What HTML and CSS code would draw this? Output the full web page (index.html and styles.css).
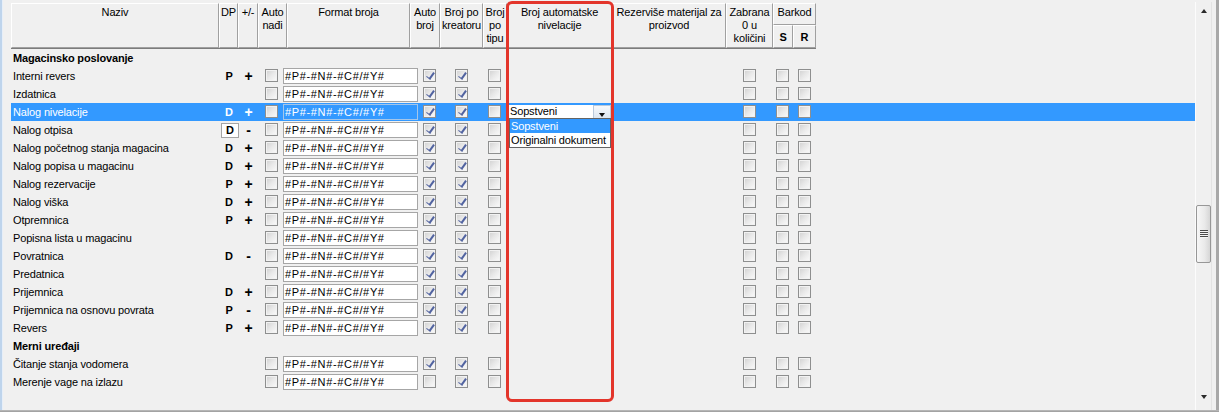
FILE: index.html
```html
<!DOCTYPE html>
<html lang="sr">
<head>
<meta charset="utf-8">
<title>Tipovi dokumenata</title>
<link rel="stylesheet" href="styles.css">
</head>
<body>
<div class="screen">
  <div class="edge"></div>
  <div class="pane">
    <div class="head">
      <div class="hc">Naziv</div>
      <div class="hc">DP</div>
      <div class="hc">+/-</div>
      <div class="hc">Auto<br>nađi</div>
      <div class="hc">Format broja</div>
      <div class="hc">Auto<br>broj</div>
      <div class="hc">Broj po<br>kreatoru</div>
      <div class="hc">Broj<br>po<br>tipu</div>
      <div class="hc">Broj automatske<br>nivelacije</div>
      <div class="hc">Rezerviše materijal za<br>proizvod</div>
      <div class="hc">Zabrana<br>0 u<br>količini</div>
      <div class="hgroup">
        <div class="hc htop">Barkod</div>
        <div class="hsub">
          <div class="hc hb">S</div>
          <div class="hc hb">R</div>
        </div>
      </div>
    </div>

    <div class="rows">
      <div class="row group"><span class="name">Magacinsko poslovanje</span></div>

      <div class="row">
        <span class="name">Interni revers</span><span class="dp">P</span><span class="sign">+</span>
        <span class="cell c-nadji"><i class="cb"></i></span>
        <span class="cell c-fmt"><span class="fmt">#P#-#N#-#C#/#Y#</span></span>
        <span class="cell c-auto"><i class="cb on"></i></span>
        <span class="cell c-kre"><i class="cb on"></i></span>
        <span class="cell c-tip"><i class="cb"></i></span>
        <span class="cell c-niv"></span><span class="cell c-rez"></span>
        <span class="cell c-zab"><i class="cb"></i></span>
        <span class="cell c-s"><i class="cb"></i></span>
        <span class="cell c-r"><i class="cb"></i></span>
      </div>

      <div class="row">
        <span class="name">Izdatnica</span><span class="dp"></span><span class="sign"></span>
        <span class="cell c-nadji"><i class="cb"></i></span>
        <span class="cell c-fmt"><span class="fmt">#P#-#N#-#C#/#Y#</span></span>
        <span class="cell c-auto"><i class="cb on"></i></span>
        <span class="cell c-kre"><i class="cb on"></i></span>
        <span class="cell c-tip"><i class="cb"></i></span>
        <span class="cell c-niv"></span><span class="cell c-rez"></span>
        <span class="cell c-zab"><i class="cb"></i></span>
        <span class="cell c-s"><i class="cb"></i></span>
        <span class="cell c-r"><i class="cb"></i></span>
      </div>

      <div class="row sel">
        <span class="name">Nalog nivelacije</span><span class="dp">D</span><span class="sign">+</span>
        <span class="cell c-nadji"><i class="cb"></i></span>
        <span class="cell c-fmt"><span class="fmt">#P#-#N#-#C#/#Y#</span></span>
        <span class="cell c-auto"><i class="cb on"></i></span>
        <span class="cell c-kre"><i class="cb on"></i></span>
        <span class="cell c-tip"><i class="cb"></i></span>
        <span class="cell c-niv">
          <span class="combo">
            <span class="combo-val">Sopstveni</span>
            <span class="combo-btn"><i class="tri-down"></i></span>
            <span class="combo-list">
              <span class="opt hi">Sopstveni</span>
              <span class="opt">Originalni dokument</span>
            </span>
          </span>
        </span>
        <span class="cell c-rez"></span>
        <span class="cell c-zab"><i class="cb"></i></span>
        <span class="cell c-s"><i class="cb"></i></span>
        <span class="cell c-r"><i class="cb"></i></span>
      </div>

      <div class="row">
        <span class="name">Nalog otpisa</span><span class="dp"><span class="dp-edit">D</span></span><span class="sign">-</span>
        <span class="cell c-nadji"><i class="cb"></i></span>
        <span class="cell c-fmt"><span class="fmt">#P#-#N#-#C#/#Y#</span></span>
        <span class="cell c-auto"><i class="cb on"></i></span>
        <span class="cell c-kre"><i class="cb on"></i></span>
        <span class="cell c-tip"><i class="cb"></i></span>
        <span class="cell c-niv"></span><span class="cell c-rez"></span>
        <span class="cell c-zab"><i class="cb"></i></span>
        <span class="cell c-s"><i class="cb"></i></span>
        <span class="cell c-r"><i class="cb"></i></span>
      </div>

      <div class="row">
        <span class="name">Nalog početnog stanja magacina</span><span class="dp">D</span><span class="sign">+</span>
        <span class="cell c-nadji"><i class="cb"></i></span>
        <span class="cell c-fmt"><span class="fmt">#P#-#N#-#C#/#Y#</span></span>
        <span class="cell c-auto"><i class="cb on"></i></span>
        <span class="cell c-kre"><i class="cb on"></i></span>
        <span class="cell c-tip"><i class="cb"></i></span>
        <span class="cell c-niv"></span><span class="cell c-rez"></span>
        <span class="cell c-zab"><i class="cb"></i></span>
        <span class="cell c-s"><i class="cb"></i></span>
        <span class="cell c-r"><i class="cb"></i></span>
      </div>

      <div class="row">
        <span class="name">Nalog popisa u magacinu</span><span class="dp">D</span><span class="sign">+</span>
        <span class="cell c-nadji"><i class="cb"></i></span>
        <span class="cell c-fmt"><span class="fmt">#P#-#N#-#C#/#Y#</span></span>
        <span class="cell c-auto"><i class="cb on"></i></span>
        <span class="cell c-kre"><i class="cb on"></i></span>
        <span class="cell c-tip"><i class="cb"></i></span>
        <span class="cell c-niv"></span><span class="cell c-rez"></span>
        <span class="cell c-zab"><i class="cb"></i></span>
        <span class="cell c-s"><i class="cb"></i></span>
        <span class="cell c-r"><i class="cb"></i></span>
      </div>

      <div class="row">
        <span class="name">Nalog rezervacije</span><span class="dp">P</span><span class="sign">+</span>
        <span class="cell c-nadji"><i class="cb"></i></span>
        <span class="cell c-fmt"><span class="fmt">#P#-#N#-#C#/#Y#</span></span>
        <span class="cell c-auto"><i class="cb on"></i></span>
        <span class="cell c-kre"><i class="cb on"></i></span>
        <span class="cell c-tip"><i class="cb"></i></span>
        <span class="cell c-niv"></span><span class="cell c-rez"></span>
        <span class="cell c-zab"><i class="cb"></i></span>
        <span class="cell c-s"><i class="cb"></i></span>
        <span class="cell c-r"><i class="cb"></i></span>
      </div>

      <div class="row">
        <span class="name">Nalog viška</span><span class="dp">D</span><span class="sign">+</span>
        <span class="cell c-nadji"><i class="cb"></i></span>
        <span class="cell c-fmt"><span class="fmt">#P#-#N#-#C#/#Y#</span></span>
        <span class="cell c-auto"><i class="cb on"></i></span>
        <span class="cell c-kre"><i class="cb on"></i></span>
        <span class="cell c-tip"><i class="cb"></i></span>
        <span class="cell c-niv"></span><span class="cell c-rez"></span>
        <span class="cell c-zab"><i class="cb"></i></span>
        <span class="cell c-s"><i class="cb"></i></span>
        <span class="cell c-r"><i class="cb"></i></span>
      </div>

      <div class="row">
        <span class="name">Otpremnica</span><span class="dp">P</span><span class="sign">+</span>
        <span class="cell c-nadji"><i class="cb"></i></span>
        <span class="cell c-fmt"><span class="fmt">#P#-#N#-#C#/#Y#</span></span>
        <span class="cell c-auto"><i class="cb on"></i></span>
        <span class="cell c-kre"><i class="cb on"></i></span>
        <span class="cell c-tip"><i class="cb"></i></span>
        <span class="cell c-niv"></span><span class="cell c-rez"></span>
        <span class="cell c-zab"><i class="cb"></i></span>
        <span class="cell c-s"><i class="cb"></i></span>
        <span class="cell c-r"><i class="cb"></i></span>
      </div>

      <div class="row">
        <span class="name">Popisna lista u magacinu</span><span class="dp"></span><span class="sign"></span>
        <span class="cell c-nadji"><i class="cb"></i></span>
        <span class="cell c-fmt"><span class="fmt">#P#-#N#-#C#/#Y#</span></span>
        <span class="cell c-auto"><i class="cb on"></i></span>
        <span class="cell c-kre"><i class="cb on"></i></span>
        <span class="cell c-tip"><i class="cb"></i></span>
        <span class="cell c-niv"></span><span class="cell c-rez"></span>
        <span class="cell c-zab"><i class="cb"></i></span>
        <span class="cell c-s"><i class="cb"></i></span>
        <span class="cell c-r"><i class="cb"></i></span>
      </div>

      <div class="row">
        <span class="name">Povratnica</span><span class="dp">D</span><span class="sign">-</span>
        <span class="cell c-nadji"><i class="cb"></i></span>
        <span class="cell c-fmt"><span class="fmt">#P#-#N#-#C#/#Y#</span></span>
        <span class="cell c-auto"><i class="cb on"></i></span>
        <span class="cell c-kre"><i class="cb on"></i></span>
        <span class="cell c-tip"><i class="cb"></i></span>
        <span class="cell c-niv"></span><span class="cell c-rez"></span>
        <span class="cell c-zab"><i class="cb"></i></span>
        <span class="cell c-s"><i class="cb"></i></span>
        <span class="cell c-r"><i class="cb"></i></span>
      </div>

      <div class="row">
        <span class="name">Predatnica</span><span class="dp"></span><span class="sign"></span>
        <span class="cell c-nadji"><i class="cb"></i></span>
        <span class="cell c-fmt"><span class="fmt">#P#-#N#-#C#/#Y#</span></span>
        <span class="cell c-auto"><i class="cb on"></i></span>
        <span class="cell c-kre"><i class="cb on"></i></span>
        <span class="cell c-tip"><i class="cb"></i></span>
        <span class="cell c-niv"></span><span class="cell c-rez"></span>
        <span class="cell c-zab"><i class="cb"></i></span>
        <span class="cell c-s"><i class="cb"></i></span>
        <span class="cell c-r"><i class="cb"></i></span>
      </div>

      <div class="row">
        <span class="name">Prijemnica</span><span class="dp">D</span><span class="sign">+</span>
        <span class="cell c-nadji"><i class="cb"></i></span>
        <span class="cell c-fmt"><span class="fmt">#P#-#N#-#C#/#Y#</span></span>
        <span class="cell c-auto"><i class="cb on"></i></span>
        <span class="cell c-kre"><i class="cb on"></i></span>
        <span class="cell c-tip"><i class="cb"></i></span>
        <span class="cell c-niv"></span><span class="cell c-rez"></span>
        <span class="cell c-zab"><i class="cb"></i></span>
        <span class="cell c-s"><i class="cb"></i></span>
        <span class="cell c-r"><i class="cb"></i></span>
      </div>

      <div class="row">
        <span class="name">Prijemnica na osnovu povrata</span><span class="dp">P</span><span class="sign">-</span>
        <span class="cell c-nadji"><i class="cb"></i></span>
        <span class="cell c-fmt"><span class="fmt">#P#-#N#-#C#/#Y#</span></span>
        <span class="cell c-auto"><i class="cb on"></i></span>
        <span class="cell c-kre"><i class="cb on"></i></span>
        <span class="cell c-tip"><i class="cb"></i></span>
        <span class="cell c-niv"></span><span class="cell c-rez"></span>
        <span class="cell c-zab"><i class="cb"></i></span>
        <span class="cell c-s"><i class="cb"></i></span>
        <span class="cell c-r"><i class="cb"></i></span>
      </div>

      <div class="row">
        <span class="name">Revers</span><span class="dp">P</span><span class="sign">+</span>
        <span class="cell c-nadji"><i class="cb"></i></span>
        <span class="cell c-fmt"><span class="fmt">#P#-#N#-#C#/#Y#</span></span>
        <span class="cell c-auto"><i class="cb on"></i></span>
        <span class="cell c-kre"><i class="cb on"></i></span>
        <span class="cell c-tip"><i class="cb"></i></span>
        <span class="cell c-niv"></span><span class="cell c-rez"></span>
        <span class="cell c-zab"><i class="cb"></i></span>
        <span class="cell c-s"><i class="cb"></i></span>
        <span class="cell c-r"><i class="cb"></i></span>
      </div>

      <div class="row group"><span class="name">Merni uređaji</span></div>

      <div class="row">
        <span class="name">Čitanje stanja vodomera</span><span class="dp"></span><span class="sign"></span>
        <span class="cell c-nadji"><i class="cb"></i></span>
        <span class="cell c-fmt"><span class="fmt">#P#-#N#-#C#/#Y#</span></span>
        <span class="cell c-auto"><i class="cb on"></i></span>
        <span class="cell c-kre"><i class="cb on"></i></span>
        <span class="cell c-tip"><i class="cb"></i></span>
        <span class="cell c-niv"></span><span class="cell c-rez"></span>
        <span class="cell c-zab"><i class="cb"></i></span>
        <span class="cell c-s"><i class="cb"></i></span>
        <span class="cell c-r"><i class="cb"></i></span>
      </div>

      <div class="row">
        <span class="name">Merenje vage na izlazu</span><span class="dp"></span><span class="sign"></span>
        <span class="cell c-nadji"><i class="cb"></i></span>
        <span class="cell c-fmt"><span class="fmt">#P#-#N#-#C#/#Y#</span></span>
        <span class="cell c-auto"><i class="cb"></i></span>
        <span class="cell c-kre"><i class="cb on"></i></span>
        <span class="cell c-tip"><i class="cb"></i></span>
        <span class="cell c-niv"></span><span class="cell c-rez"></span>
        <span class="cell c-zab"><i class="cb"></i></span>
        <span class="cell c-s"><i class="cb"></i></span>
        <span class="cell c-r"><i class="cb"></i></span>
      </div>
    </div>

    <div class="col-mark"></div>
  </div>

  <div class="vscroll">
    <i class="arr-up"></i>
    <div class="thumb"><i class="grip"></i></div>
    <i class="arr-down"></i>
  </div>
  <div class="gap"></div>
  <div class="frame-r"></div>
</div>
<div class="base-line"></div>
</body>
</html>
```

FILE: styles.css
```css
* {
  box-sizing: border-box;
}

body {
  margin: 0;
  background: #f0f0f0;
  font-family: "Liberation Sans", Arial, sans-serif;
  font-size: 11px;
  letter-spacing: -0.15px;
  color: #000;
  overflow: hidden;
}

.screen {
  display: flex;
  height: 410px;
}

.edge {
  width: 3px;
  background: linear-gradient(to right, #bed4ec 0 2px, #e6eef8 2px);
}

.pane {
  flex: 1;
  position: relative;
  padding: 3px 0 0 8px;
}

/* ---------- column headers ---------- */
.head {
  display: grid;
  grid-template-columns: 208px 19px 20px 29px 123px 30px 43px 24px 105px 114px 47px 43px;
  width: 805px;
  height: 46px;
  border-bottom: 1px solid #7c7c7c;
}

.hc {
  border-top: 1px solid #fff;
  border-left: 1px solid #fff;
  border-right: 1px solid #a0a0a0;
  border-bottom: 1px solid #a0a0a0;
  padding-top: 2px;
  text-align: center;
  line-height: 13px;
  white-space: nowrap;
  overflow: visible;
}

.hgroup {
  display: flex;
  flex-direction: column;
}

.htop {
  height: 22px;
}

.hsub {
  flex: 1;
  display: grid;
  grid-template-columns: 20px 23px;
}

.hb {
  font-weight: bold;
  padding-top: 5px;
}

/* ---------- body rows ---------- */
.row {
  display: grid;
  grid-template-columns: 208px 19px 20px 24px 137px 21px 43px 24px 105px 114px 47px 20px 23px 1fr;
  height: 18px;
  line-height: 18px;
}

.row.sel {
  background: #3399ff;
  color: #fff;
}

.name {
  padding-left: 2px;
  white-space: nowrap;
}

.group .name {
  font-weight: bold;
}

.dp {
  font-weight: bold;
  text-align: center;
  padding-left: 1px;
}

.dp-edit {
  display: block;
  margin: 2px 0 0 1px;
  width: 18px;
  height: 15px;
  line-height: 13px;
  background: #fff;
  border: 1px solid #a5a5a5;
  text-align: center;
}

.sign {
  font-weight: bold;
  font-size: 14px;
  text-align: center;
  padding-left: 1px;
}

.cell {
  display: flex;
  align-items: flex-start;
}

.c-nadji { padding-left: 7px; }
.c-fmt   { padding-left: 1px; }
.c-auto  { padding-left: 4px; }
.c-kre   { padding-left: 15px; }
.c-tip   { padding-left: 5px; }
.c-niv   { padding-left: 2px; }
.c-zab   { padding-left: 17px; }
.c-s     { padding-left: 3px; }
.c-r     { padding-left: 5px; }

/* classic checkbox */
.cb {
  position: relative;
  display: block;
  width: 13px;
  height: 13px;
  margin-top: 2px;
  border: 1px solid #8e8f8f;
  background: linear-gradient(135deg, #d0d0d0 0%, #e9e9e9 50%, #fbfbfb 100%);
  box-shadow: inset 0 0 0 1px #f2f2f2;
}

.cb.on::after {
  content: "";
  position: absolute;
  left: 4px;
  top: 1px;
  width: 3px;
  height: 7px;
  border-right: 2px solid #5163a0;
  border-bottom: 1px solid #5163a0;
  transform: rotate(36deg);
}

/* number format field */
.fmt {
  display: block;
  margin-top: 1px;
  width: 135px;
  height: 16px;
  border: 1px solid #a6a6a6;
  background: #fff;
  padding-left: 1px;
  line-height: 14px;
  letter-spacing: 0.65px;
  white-space: nowrap;
}

.sel .fmt {
  background: transparent;
  border-color: #a4c6ea;
}

/* drop-down editor */
.combo {
  position: relative;
  display: block;
  margin-top: 2px;
  width: 102px;
  height: 13px;
  background: #fff;
  color: #000;
}

.combo-val {
  display: block;
  padding-left: 1px;
  line-height: 13px;
}

.combo-btn {
  position: absolute;
  top: 0;
  right: 0;
  width: 18px;
  height: 14px;
  border: 1px solid #b9c9db;
  background: linear-gradient(#f6f8fb, #dde6f0);
}

.tri-down {
  position: absolute;
  left: 5px;
  top: 7px;
  border-left: 3.5px solid transparent;
  border-right: 3.5px solid transparent;
  border-top: 4px solid #111;
}

.combo-list {
  position: absolute;
  z-index: 3;
  left: 0;
  top: 13px;
  width: 102px;
  border: 1px solid #646464;
  background: #fff;
}

.opt {
  display: block;
  height: 14px;
  line-height: 14px;
  padding-left: 1px;
  white-space: nowrap;
}

.opt.hi {
  background: #3399ff;
  color: #fff;
}

/* highlight frame around the levelling column */
.col-mark {
  position: absolute;
  z-index: 5;
  left: 503px;
  top: 1px;
  width: 108px;
  height: 401px;
  border: 3px solid #e3352b;
  border-radius: 6px;
  pointer-events: none;
}

/* ---------- vertical scrollbar ---------- */
.vscroll {
  position: relative;
  width: 17px;
  margin-top: 2px;
  border-left: 1px solid #fcfcfc;
  border-right: 1px solid #e3e3e3;
  background: #f0f0f0;
}

.arr-up {
  position: absolute;
  left: 5px;
  top: 7px;
  border-left: 3.5px solid transparent;
  border-right: 3.5px solid transparent;
  border-bottom: 4px solid #2a2a2a;
}

.arr-down {
  position: absolute;
  left: 5px;
  bottom: 11px;
  border-left: 3.5px solid transparent;
  border-right: 3.5px solid transparent;
  border-top: 4px solid #2a2a2a;
}

.thumb {
  position: absolute;
  left: 0;
  top: 203px;
  width: 15px;
  height: 58px;
  border: 1px solid #979797;
  border-radius: 2px;
  background: linear-gradient(to right, #f7f7f7, #e9e9e9 60%, #d6d6d6);
}

.grip {
  position: absolute;
  left: 3px;
  top: 24px;
  width: 8px;
  height: 8px;
  background: repeating-linear-gradient(#4a4a4a 0 1px, #f4f4f4 1px 2px);
}

.gap {
  width: 4px;
}

.frame-r {
  width: 3px;
  background: #a8a8a8;
}

.base-line {
  height: 2px;
  border-top: 1px solid #b5b5b5;
  background: #a3a3a3;
}
```
